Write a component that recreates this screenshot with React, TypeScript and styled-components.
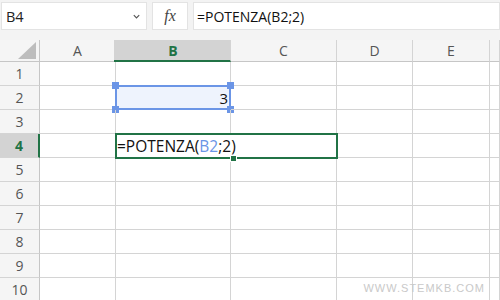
import React from 'react';
import styled, { createGlobalStyle, css } from 'styled-components';

const GREEN = '#217346';
const BLUE = '#6b95e6';
const GRID = '#d4d4d4';

const GlobalStyle = createGlobalStyle`
  body {
    margin: 0;
    background: #fff;
    font-family: "Open Sans", "Noto Sans", "Liberation Sans", sans-serif;
  }
`;

const Screen = styled.div`
  width: 500px;
  height: 300px;
  overflow: hidden;
  position: relative;
  background: #fff;
`;

const Bar = styled.div`
  display: flex;
  align-items: stretch;
  height: 40px;
  padding: 2px 0 10px 1px;
  box-sizing: border-box;
  background: #f3f3f3;
  gap: 5px;
`;

const Box = styled.div<{ $w?: number; $grow?: boolean }>`
  background: #fff;
  border: 1px solid #e3e3e3;
  box-sizing: border-box;
  display: flex;
  align-items: center;
  width: ${(p) => (p.$w ? `${p.$w}px` : 'auto')};
  flex: ${(p) => (p.$grow ? '1' : 'none')};
  font-size: 14px;
  color: #222;
`;

const NameText = styled.span`
  flex: 1;
  padding-left: 4px;
  font-size: 14.5px;
`;

const Chevron = styled.svg`
  width: 9px;
  height: 9px;
  margin-right: 5px;
`;

const Fx = styled.span`
  width: 100%;
  text-align: center;
  font-family: "Liberation Serif", serif;
  font-style: italic;
  font-size: 16px;
  color: #444;
`;

const FormulaText = styled.span`
  padding-left: 3px;
  font-size: 14px;
  color: #111;
`;

const Sheet = styled.div`
  position: relative;
  display: grid;
  grid-template-columns: 40px 76px 115px 106px 76px 77px 1fr;
  grid-template-rows: 22px repeat(10, 24px);
`;

const Corner = styled.div`
  background: #f5f5f5;
  border-right: 1px solid #c6c6c6;
  border-bottom: 1px solid #c6c6c6;
  box-sizing: border-box;
  display: flex;
  align-items: flex-end;
  justify-content: flex-end;
  padding: 0 3px 2px 0;
`;

const Triangle = styled.div`
  width: 0;
  height: 0;
  border-left: 18px solid transparent;
  border-bottom: 17px solid #bdbdbd;
`;

const ColHead = styled.div<{ $active?: boolean }>`
  background: #f5f5f5;
  border-right: 1px solid ${GRID};
  border-bottom: 1px solid #c6c6c6;
  box-sizing: border-box;
  display: flex;
  align-items: center;
  justify-content: center;
  font-size: 14px;
  color: #555;
  ${(p) =>
    p.$active &&
    css`
      background: #d3d3d3;
      color: ${GREEN};
      font-weight: 700;
      border-bottom: 2px solid ${GREEN};
      margin-left: -2px;
      padding-left: 2px;
    `}
`;

const RowHead = styled.div<{ $active?: boolean }>`
  background: #f5f5f5;
  border-right: 1px solid #c6c6c6;
  border-bottom: 1px solid ${GRID};
  box-sizing: border-box;
  display: flex;
  align-items: center;
  justify-content: center;
  font-size: 14px;
  color: #555;
  ${(p) =>
    p.$active &&
    css`
      background: #d3d3d3;
      color: ${GREEN};
      font-weight: 700;
      border-right: 2px solid ${GREEN};
    `}
`;

const Cell = styled.div<{ $selected?: boolean }>`
  position: relative;
  border-right: 1px solid ${GRID};
  border-bottom: 1px solid ${GRID};
  box-sizing: border-box;
  display: flex;
  align-items: center;
  justify-content: flex-end;
  font-size: 15px;
  color: #111;
  ${(p) =>
    p.$selected &&
    css`
      background: #eef3fd;
      border: 2px solid ${BLUE};
      margin: -1px 0 0 -1px;
      padding-right: 1px;
    `}
`;

const Handle = styled.span<{ $top?: boolean; $left?: boolean }>`
  position: absolute;
  width: 7px;
  height: 7px;
  background: ${BLUE};
  ${(p) => (p.$top ? 'top: -5px;' : 'bottom: -5px;')}
  ${(p) => (p.$left ? 'left: -5px;' : 'right: -5px;')}
`;

const Editor = styled.div`
  position: absolute;
  left: 115px;
  top: 93px;
  width: 223px;
  height: 26px;
  border: 2px solid ${GREEN};
  box-sizing: border-box;
  background: #fff;
  display: flex;
  align-items: center;
  padding-left: 0;
  font-size: 15.5px;
  color: #111;
`;

const Ref = styled.span`
  color: ${BLUE};
`;

const FillHandle = styled.span`
  position: absolute;
  left: 113px;
  bottom: -5px;
  width: 5px;
  height: 5px;
  background: ${GREEN};
  border: 1px solid #fff;
  border-top: none;
`;

const Watermark = styled.div`
  position: absolute;
  right: 15px;
  bottom: 6px;
  font-family: "Liberation Sans", sans-serif;
  font-size: 11px;
  letter-spacing: 1px;
  color: #c9c9c9;
`;

const cols = ['A', 'B', 'C', 'D', 'E', ''];

export default function App() {
  const rows = Array.from({ length: 10 }, (_, i) => i + 1);
  return (
    <Screen>
      <GlobalStyle />
      <Bar>
        <Box $w={146}>
          <NameText>B4</NameText>
          <Chevron viewBox="0 0 10 10">
            <path d="M2 3.5 L5 6.5 L8 3.5" fill="none" stroke="#555" strokeWidth="1.3" />
          </Chevron>
        </Box>
        <Box $w={36}>
          <Fx>fx</Fx>
        </Box>
        <Box $grow>
          <FormulaText>=POTENZA(B2;2)</FormulaText>
        </Box>
      </Bar>
      <Sheet>
        <Corner>
          <Triangle />
        </Corner>
        {cols.map((c, i) => (
          <ColHead key={i} $active={c === 'B'}>
            {c}
          </ColHead>
        ))}
        {rows.map((r) => (
          <React.Fragment key={r}>
            <RowHead $active={r === 4}>{r}</RowHead>
            {cols.map((c, i) =>
              r === 2 && c === 'B' ? (
                <Cell key={i} $selected>
                  3
                  <Handle $top $left />
                  <Handle $top />
                  <Handle $left />
                  <Handle />
                </Cell>
              ) : (
                <Cell key={i} />
              )
            )}
          </React.Fragment>
        ))}
        <Editor>
          =POTENZA(<Ref>B2</Ref>;2)
          <FillHandle />
        </Editor>
      </Sheet>
      <Watermark>WWW.STEMKB.COM</Watermark>
    </Screen>
  );
}
